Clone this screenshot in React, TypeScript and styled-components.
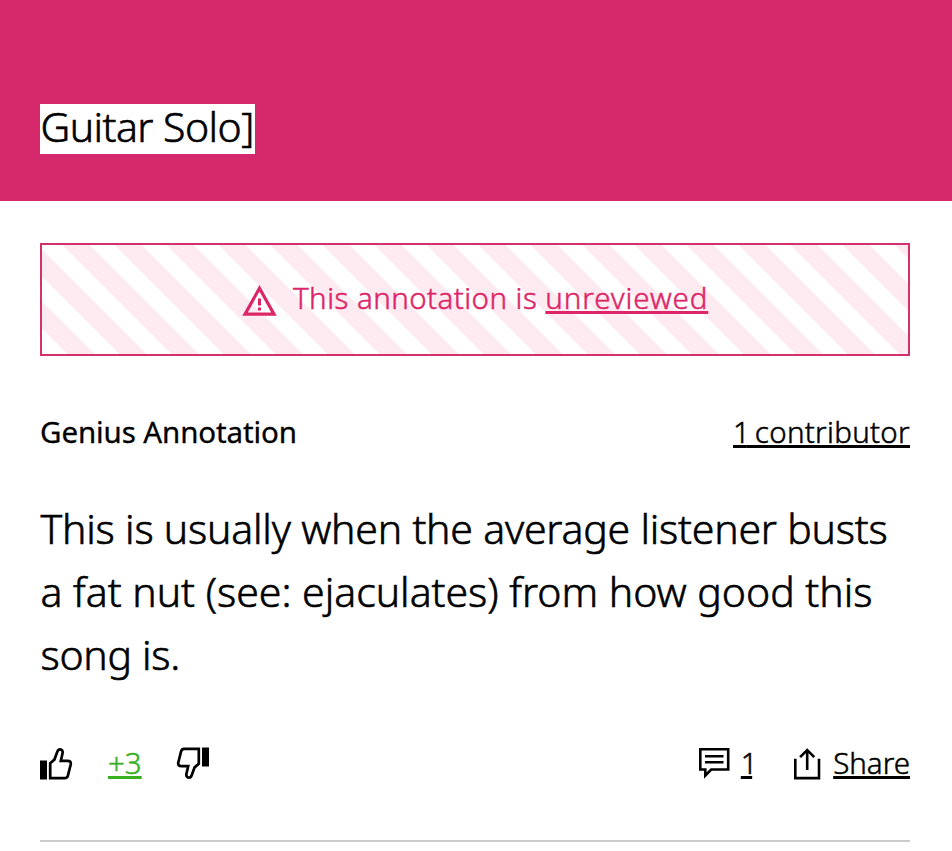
import React from "react";
import styled, { createGlobalStyle } from "styled-components";

const GlobalStyle = createGlobalStyle`
  *, *::before, *::after { box-sizing: border-box; }
  body {
    margin: 0;
    background: #fff;
    color: #000;
    font-family: "Noto Sans", "Open Sans", sans-serif;
    font-weight: 300;
    overflow: hidden;
  }
`;

const Page = styled.main`
  width: 100%;
  height: 851px;
  overflow: hidden;
`;

const Header = styled.header`
  height: 201px;
  padding: 104px 40px 0;
  background: #d5296b;
`;

const Referent = styled.h1`
  margin: 0;
  display: inline-block;
  width: 215px;
  height: 50px;
  background: #fff;
  font-size: 41px;
  font-weight: 300;
  line-height: 44px;
  letter-spacing: -0.55px;
  text-indent: 0.5px;
  white-space: nowrap;
  -webkit-text-stroke: 0.6px currentColor;
`;

const Body = styled.section`
  padding: 42px 42px 0 40px;
`;

const Banner = styled.div`
  display: flex;
  align-items: center;
  height: 113px;
  padding: 0 0 3px 200px;
  border: 2px solid #d3316c;
  color: #dd2668;
  background: repeating-linear-gradient(
    45deg,
    #fff 0,
    #fff 18.2px,
    #fdebf1 18.2px,
    #fdebf1 36.77px
  );
`;

const Label = styled.span<{ $spacing?: number }>`
  font-size: 29.5px;
  line-height: 40px;
  letter-spacing: ${(p) => p.$spacing ?? 0}px;
  white-space: pre;
  -webkit-text-stroke: 0.5px currentColor;
`;

const Heading = styled.h2`
  margin: 0;
  font-size: 29.5px;
  font-weight: 400;
  line-height: 40px;
  letter-spacing: -0.1px;
  -webkit-text-stroke: 0.3px currentColor;
`;

const TextLink = styled.a<{ $spacing?: number; $color?: string }>`
  font-size: 29.5px;
  line-height: 40px;
  color: ${(p) => p.$color ?? "inherit"};
  letter-spacing: ${(p) => p.$spacing ?? 0}px;
  text-decoration: underline;
  text-decoration-thickness: 3px;
  text-underline-offset: 2px;
  text-decoration-skip-ink: none;
  white-space: pre;
  -webkit-text-stroke: 0.5px currentColor;
`;

const NarrowOne = styled.span`
  margin-left: -3px;
  letter-spacing: -3px;
`;

const WarningIcon = styled.svg`
  width: 35px;
  height: 32px;
  margin: 5px 16px 0 0;
  flex: none;
`;

const Meta = styled.div`
  display: flex;
  justify-content: space-between;
  margin-top: 56px;
`;

const Annotation = styled.p`
  margin: 45px 0 0;
  padding-left: 0.5px;
  font-size: 41px;
  line-height: 63px;
  -webkit-text-stroke: 0.6px currentColor;
`;

const Line = styled.span<{ $spacing: number }>`
  display: block;
  letter-spacing: ${(p) => p.$spacing}px;
  white-space: nowrap;
`;

const Actions = styled.div`
  display: flex;
  align-items: flex-start;
  height: 99px;
  margin-top: 57px;
  border-bottom: 2px solid #ccc;
`;

const Thumb = styled.svg<{ $down?: boolean }>`
  width: 33px;
  height: 32px;
  margin: ${(p) => (p.$down ? "4px 0 0 -1px" : "5px 0 0")};
  transform: ${(p) => (p.$down ? "rotate(180deg)" : "none")};
`;

const Votes = styled.div`
  display: flex;
  gap: 35px;
  margin-right: auto;
`;

const Action = styled.div<{ $gap: number; $after?: number }>`
  display: flex;
  gap: ${(p) => p.$gap}px;
  margin-right: ${(p) => p.$after ?? 0}px;
`;

const Glyph = styled.svg<{ $w: number }>`
  width: ${(p) => p.$w}px;
  height: 32px;
  margin-top: 5px;
`;

const ThumbIcon = ({ down }: { down?: boolean }) => (
  <Thumb viewBox="0 0 33 32" $down={down}>
    <path d="M0 12.5H7V31.5H0Z" fill="#000" />
    <path
      d="M10.2 15.2 14.4 11.6 17.2 4C17.8 2.2 18.8 1.4 20 1.4C22.2 1.4 23 3.5 22.5 5.5L20.8 12.8H27.5C30.1 12.8 31.2 14.1 30.7 16.5L27.9 27.6C27.4 29.4 26.7 30.1 24.9 30.1H10.2Z"
      fill="none"
      stroke="#000"
      strokeWidth="2.7"
    />
  </Thumb>
);

export default function App() {
  return (
    <Page>
      <GlobalStyle />
      <Header>
        <Referent>Guitar Solo]</Referent>
      </Header>
      <Body>
        <Banner>
          <WarningIcon viewBox="0 0 35 32">
            <path d="M17.5 3.2 32 29.1H3Z" fill="none" stroke="currentColor" strokeWidth="3.2" />
            <path d="M16 13.5H19V20.5H16ZM16 22.5H19V25.5H16Z" fill="currentColor" />
          </WarningIcon>
          <Label $spacing={0.45}>{"This annotation is "}</Label>
          <TextLink $spacing={0.9}>unreviewed</TextLink>
        </Banner>
        <Meta>
          <Heading>Genius Annotation</Heading>
          <TextLink $spacing={0.3}>
            <NarrowOne>1</NarrowOne> contributor
          </TextLink>
        </Meta>
        <Annotation>
          <Line $spacing={-0.22}>This is usually when the average listener busts</Line>
          <Line $spacing={-0.02}>a fat nut (see: ejaculates) from how good this</Line>
          <Line $spacing={-0.3}>song is.</Line>
        </Annotation>
        <Actions>
          <Votes>
            <ThumbIcon />
            <TextLink $color="#38b01f">+3</TextLink>
            <ThumbIcon down />
          </Votes>
          <Action $gap={11} $after={42}>
            <Glyph viewBox="0 0 31 32" $w={31}>
              <path d="M1.3 1.3H29.2V21.5H12.2L6.3 27.5V21.5H1.3Z" fill="none" stroke="#000" strokeWidth="2.6" />
              <path d="M6 8.2H24.5M6 14.2H24.5" stroke="#000" strokeWidth="2.6" />
            </Glyph>
            <TextLink $spacing={-5.5}>1</TextLink>
          </Action>
          <Action $gap={12}>
            <Glyph viewBox="0 0 27 32" $w={27}>
              <path d="M1.3 10.8V30.1H25V10.8M13.2 22V2.2M6.1 9.2 13.2 2.1 20.3 9.2" fill="none" stroke="#000" strokeWidth="2.6" />
            </Glyph>
            <TextLink>Share</TextLink>
          </Action>
        </Actions>
      </Body>
    </Page>
  );
}
